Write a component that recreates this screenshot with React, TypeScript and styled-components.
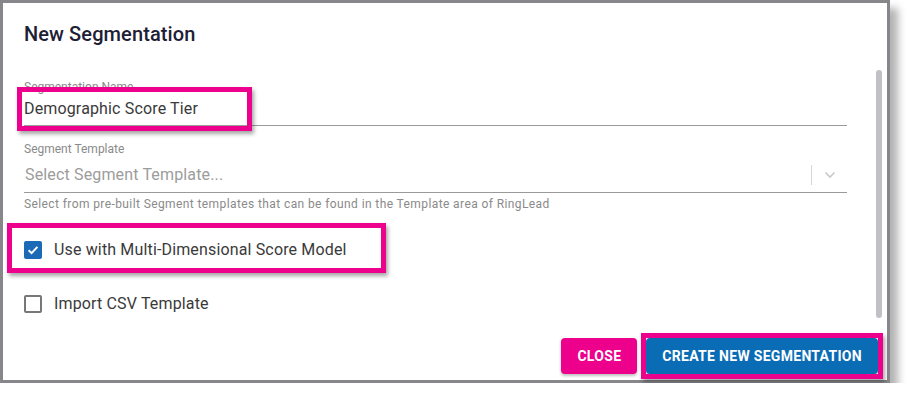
import React from "react"
import styled, { createGlobalStyle } from "styled-components"

const GlobalStyle = createGlobalStyle`
  body {
    margin: 0;
    background: #ffffff;
    font-family: Roboto, "Liberation Sans", sans-serif;
  }
`

const App = () => {
  return (
    <>
      <GlobalStyle />
      <Frame>
        <Title>New Segmentation</Title>
        <Body>
          <Form>
            <FieldLabel>Segmentation Name</FieldLabel>
            <InputRow>Demographic Score Tier</InputRow>

            <FieldLabel $top={15}>Segment Template</FieldLabel>
            <SelectRow>
              <Placeholder>Select Segment Template...</Placeholder>
              <Indicator>
                <svg width="12" height="8" viewBox="0 0 12 8">
                  <path d="M1.5 1.5 L6 6 L10.5 1.5" fill="none" stroke="#c8c8c8" strokeWidth="1.6" />
                </svg>
              </Indicator>
            </SelectRow>
            <Helper>Select from pre-built Segment templates that can be found in the Template area of RingLead</Helper>

            <CheckRow $top={28}>
              <Box $checked>
                <svg width="14" height="14" viewBox="0 0 14 14">
                  <path d="M2.6 7.2 L5.6 10.1 L11.4 3.9" fill="none" stroke="#ffffff" strokeWidth="2" />
                </svg>
              </Box>
              <CheckText>Use with Multi-Dimensional Score Model</CheckText>
            </CheckRow>
            <CheckRow $top={35}>
              <Box />
              <CheckText>Import CSV Template</CheckText>
            </CheckRow>
          </Form>
          <Track>
            <Thumb />
          </Track>
        </Body>
        <Footer>
          <Button $color="#ec008c">Close</Button>
          <Button $color="#0a6cb4">Create New Segmentation</Button>
        </Footer>

        <Mark $left={14} $top={84} $w={235} $h={44} />
        <Mark $left={4} $top={220} $w={379} $h={50} />
        <Mark $left={638} $top={330} $w={242} $h={46} />
      </Frame>
    </>
  )
}

export default App

const Frame = styled.div`
  position: relative;
  width: 890px;
  height: 383px;
  box-sizing: border-box;
  border: 3px solid #87878b;
  background: #ffffff;
  box-shadow: 8px 8px 8px rgba(0, 0, 0, 0.3);
  display: flex;
  flex-direction: column;
`

const Title = styled.div`
  padding: 19px 0 0 21px;
  font-size: 20px;
  line-height: 24px;
  font-weight: 500;
  letter-spacing: 0.1px;
  color: #1d2034;
`

const Body = styled.div`
  flex: 1;
  display: flex;
`

const Form = styled.div`
  width: 823px;
  margin-left: 21px;
  padding-top: 33px;
  display: flex;
  flex-direction: column;
`

const FieldLabel = styled.div<{ $top?: number }>`
  margin-top: ${p => p.$top || 0}px;
  font-size: 12px;
  line-height: 16px;
  color: #8a8a8a;
`

const InputRow = styled.div`
  padding: 4px 0 6px;
  font-size: 16px;
  line-height: 20px;
  letter-spacing: 0.15px;
  color: #3a3a3a;
  border-bottom: 1px solid #9a9a9a;
`

const SelectRow = styled.div`
  display: flex;
  align-items: center;
  padding: 8px 0 7px 1px;
  border-bottom: 1px solid #9a9a9a;
`

const Placeholder = styled.div`
  flex: 1;
  font-size: 16px;
  line-height: 20px;
  letter-spacing: 0.15px;
  color: #9c9c9c;
`

const Indicator = styled.div`
  width: 36px;
  height: 20px;
  box-sizing: border-box;
  border-left: 1px solid #d6d6d6;
  display: flex;
  align-items: center;
  justify-content: center;
`

const Helper = styled.div`
  margin-top: 3px;
  font-size: 12px;
  line-height: 16px;
  letter-spacing: 0.4px;
  color: #8a8a8a;
`

const CheckRow = styled.div<{ $top: number }>`
  margin-top: ${p => p.$top}px;
  display: flex;
  align-items: center;
  gap: 12px;
  height: 19px;
`

const Box = styled.div<{ $checked?: boolean }>`
  width: 18px;
  height: 18px;
  box-sizing: border-box;
  border-radius: 2px;
  display: flex;
  align-items: center;
  justify-content: center;
  background: ${p => (p.$checked ? "#1b6ab6" : "#ffffff")};
  border: ${p => (p.$checked ? "none" : "2px solid #777777")};
`

const CheckText = styled.span`
  font-size: 16px;
  line-height: 20px;
  letter-spacing: 0.15px;
  color: #3a3a3a;
`

const Track = styled.div`
  margin-left: 29px;
  padding-top: 24px;
`

const Thumb = styled.div`
  width: 6px;
  height: 248px;
  border-radius: 3px;
  background: #c1c1c5;
`

const Footer = styled.div`
  display: flex;
  justify-content: flex-end;
  gap: 9px;
  padding: 8px 9px 6px 0;
`

const Button = styled.button<{ $color: string }>`
  height: 36px;
  padding: 0 16px;
  border: none;
  border-radius: 4px;
  background: ${p => p.$color};
  color: #ffffff;
  font-family: Roboto, "Liberation Sans", sans-serif;
  font-size: 14px;
  font-weight: 700;
  letter-spacing: 0.3px;
  text-transform: uppercase;
  box-shadow: 0 2px 3px rgba(0, 0, 0, 0.25);
`

const Mark = styled.div<{ $left: number; $top: number; $w: number; $h: number }>`
  position: absolute;
  left: ${p => p.$left}px;
  top: ${p => p.$top}px;
  width: ${p => p.$w}px;
  height: ${p => p.$h}px;
  box-sizing: border-box;
  border: 5px solid #ec008c;
  box-shadow: 2px 3px 4px rgba(0, 0, 0, 0.35);
  pointer-events: none;
`
